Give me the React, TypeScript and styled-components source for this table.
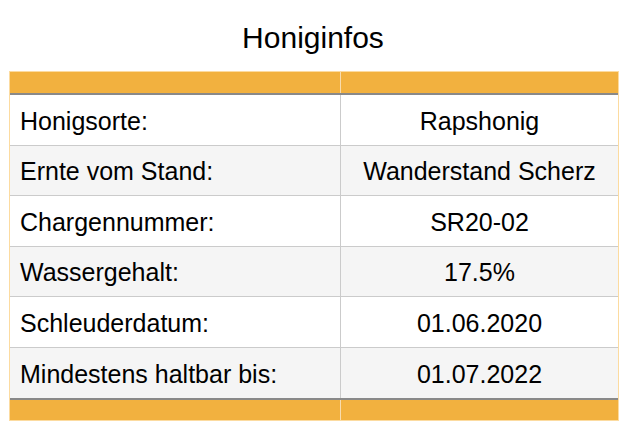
import React from "react";
import styled, { createGlobalStyle } from "styled-components";

const Global = createGlobalStyle`
  html, body { margin: 0; padding: 0; background: #ffffff; }
  body { font-family: "Liberation Sans", Arial, Helvetica, sans-serif; color: #000; }
`;

const Page = styled.div`
  width: 626px;
  display: flex;
  flex-direction: column;
`;

const Title = styled.h1`
  margin: 0;
  height: 71px;
  box-sizing: border-box;
  padding-top: 21px;
  font-size: 30px;
  line-height: 34px;
  font-weight: 400;
  text-align: center;
`;

const Table = styled.div`
  margin-left: 9px;
  width: 610px;
  box-sizing: border-box;
  border: 1px solid #fcdba0;
  display: flex;
  flex-direction: column;
`;

const Band = styled.div<{ $top?: boolean }>`
  display: grid;
  grid-template-columns: 331px 1fr;
  height: ${(p) => (p.$top ? 23 : 22)}px;
  box-sizing: border-box;
  background: #f2b13f;
  ${(p) => (p.$top ? "border-bottom: 2px solid #898989;" : "border-top: 2px solid #898989;")}
`;

const BandCell = styled.div`
  &:first-child { border-right: 1px solid #f8dcae; }
`;

const Row = styled.div<{ $shade: boolean; $last: boolean }>`
  display: grid;
  grid-template-columns: 331px 1fr;
  height: 50.5px;
  box-sizing: border-box;
  background: ${(p) => (p.$shade ? "#f5f5f5" : "#ffffff")};
  border-bottom: ${(p) => (p.$last ? "none" : "1px solid #cbcbcb")};
`;

const Label = styled.div`
  display: flex;
  align-items: center;
  padding-left: 10px;
  padding-top: 3px;
  border-right: 1px solid #cbcbcb;
  font-size: 25px;
`;

const Value = styled.div`
  display: flex;
  align-items: center;
  justify-content: center;
  padding-top: 3px;
  font-size: 25px;
`;

const rows: [string, string][] = [
  ["Honigsorte:", "Rapshonig"],
  ["Ernte vom Stand:", "Wanderstand Scherz"],
  ["Chargennummer:", "SR20-02"],
  ["Wassergehalt:", "17.5%"],
  ["Schleuderdatum:", "01.06.2020"],
  ["Mindestens haltbar bis:", "01.07.2022"],
];

export default function App() {
  return (
    <Page>
      <Global />
      <Title>Honiginfos</Title>
      <Table>
        <Band $top>
          <BandCell />
          <BandCell />
        </Band>
        {rows.map(([k, v], i) => (
          <Row key={k} $shade={i % 2 === 1} $last={i === rows.length - 1}>
            <Label>{k}</Label>
            <Value>{v}</Value>
          </Row>
        ))}
        <Band>
          <BandCell />
          <BandCell />
        </Band>
      </Table>
    </Page>
  );
}
